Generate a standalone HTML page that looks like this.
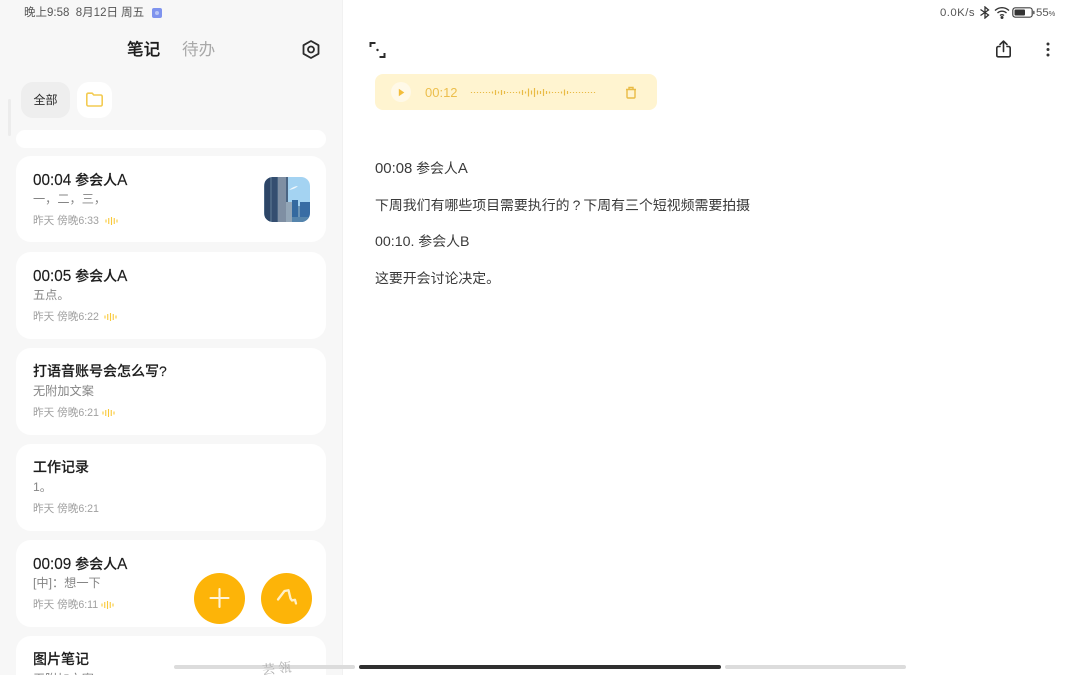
<!DOCTYPE html>
<html lang="zh">
<head>
<meta charset="utf-8">
<style>
html,body{margin:0;padding:0;width:1080px;height:675px;overflow:hidden;background:#fff;font-family:"Liberation Sans","Noto Sans CJK SC",sans-serif;}
#root{position:relative;width:1080px;height:675px;overflow:hidden;filter:blur(.35px);}
.a{position:absolute;white-space:nowrap;}
#side{position:absolute;left:0;top:0;width:342px;height:675px;background:#f7f7f7;border-right:1px solid #f1f1f1;box-sizing:content-box;}
.card{position:absolute;left:16px;width:310px;background:#fff;border-radius:15px;}
.t{position:absolute;left:17px;top:13px;font-size:14px;line-height:22px;color:#1c1c1c;font-weight:500;white-space:nowrap;-webkit-text-stroke:.15px #1c1c1c;}
.t.c{top:12px;}
.t i{font-style:normal;font-size:15.3px;}
.p i{font-style:normal;font-size:14.9px;}
.s{position:absolute;left:17px;top:34px;font-size:12.2px;line-height:18px;color:#858585;white-space:nowrap;}
.m{position:absolute;left:17px;top:57px;font-size:10.6px;line-height:16px;color:#a0a0a0;white-space:nowrap;}
.w{position:absolute;top:60px;}
.p{position:absolute;left:375px;font-size:13.9px;line-height:20px;color:#3a3a3a;white-space:nowrap;}
</style>
</head>
<body>
<div id="root">
<div id="side"></div>

<div class="a" style="left:24px;top:5px;font-size:11.5px;line-height:16px;color:#555;">晚上9:58&nbsp; 8月12日 周五</div>
<div class="a" style="left:152px;top:8px;width:10px;height:10px;border-radius:2px;background:#7f93ee;"></div>
<div class="a" style="left:155px;top:11px;width:4px;height:4px;border-radius:50%;background:#b9c6f7;"></div>

<div class="a" style="left:127px;top:38px;font-size:16.6px;line-height:24px;color:#1d1d1d;font-weight:500;-webkit-text-stroke:.2px #1d1d1d;">笔记</div>
<div class="a" style="left:182px;top:38px;font-size:16.6px;line-height:24px;color:#a8a8a8;">待办</div>
<svg class="a" style="left:301px;top:39px;" width="20" height="21" viewBox="0 0 20 21" fill="none" stroke="#2c2c2c" stroke-width="1.800"><path d="M10 2l7.500 4.200v8.600L10 19l-7.500-4.200V6.200z" stroke-linejoin="round"/><circle cx="10" cy="10.500" r="3"/></svg>

<div class="a" style="left:21px;top:82px;width:49px;height:36px;border-radius:12px;background:#eeeeee;text-align:center;font-size:12px;line-height:36px;color:#2b2b2b;">全部</div>
<div class="a" style="left:77px;top:82px;width:35px;height:36px;border-radius:12px;background:#fff;"></div>
<svg class="a" style="left:85px;top:92px;" width="19" height="16" viewBox="0 0 19 16" fill="none" stroke="#f3cb52" stroke-width="1.600"><path d="M1.800 2.800c0-1 .6-1.600 1.600-1.600h3.800l1.600 1.800h6.800c1 0 1.600.6 1.600 1.600v7.800c0 1-.6 1.600-1.600 1.600H3.400c-1 0-1.600-.6-1.600-1.600z" stroke-linejoin="round"/></svg>
<div class="a" style="left:8px;top:99px;width:3px;height:37px;background:#ececec;border-radius:2px;"></div>

<div class="card" style="top:130px;height:18px;border-radius:10px;"></div>

<div class="card" style="top:156px;height:86px;">
  <div class="t"><i>00:04</i> 参会人<i>A</i></div>
  <div class="s">一，二，三，</div>
  <div class="m">昨天 傍晚6:33</div>
  <svg class="w" style="left:89px;" width="13" height="10" viewBox="0 0 13 10" fill="none" stroke="#f8c93a" stroke-width="1.100"><path d="M1 3.500v3M3.750 2v6M6.500 1v8M9.250 2v6M12 3.500v3"/></svg>
  <svg class="a" style="left:248px;top:21px;border-radius:9px;" width="46" height="45" viewBox="0 0 46 45">
    <rect width="46" height="45" fill="#a4d3f2"/>
    <path d="M25 13q5-4 9-4-3 3-9 4z" fill="#eef6fb"/>
    <rect x="0" y="0" width="24" height="45" fill="#4a6583"/>
    <rect x="1" y="0" width="5" height="45" fill="#2d4566"/>
    <rect x="8" y="0" width="5" height="45" fill="#344e70"/>
    <rect x="14" y="0" width="8" height="45" fill="#7f8fa3"/>
    <rect x="22" y="25" width="6" height="20" fill="#93a6b7"/>
    <rect x="28" y="23" width="6" height="22" fill="#34699f"/>
    <rect x="34" y="29" width="2" height="16" fill="#6a93b5"/>
    <rect x="36" y="25" width="10" height="20" fill="#386ca4"/>
    <rect x="28" y="40" width="18" height="5" fill="#5584ac"/>
  </svg>
</div>

<div class="card" style="top:252px;height:87px;">
  <div class="t"><i>00:05</i> 参会人<i>A</i></div>
  <div class="s">五点。</div>
  <div class="m">昨天 傍晚6:22</div>
  <svg class="w" style="left:88px;" width="13" height="10" viewBox="0 0 13 10" fill="none" stroke="#f8c93a" stroke-width="1.100"><path d="M1 3.500v3M3.750 2v6M6.500 1v8M9.250 2v6M12 3.500v3"/></svg>
</div>

<div class="card" style="top:348px;height:87px;">
  <div class="t c">打语音账号会怎么写?</div>
  <div class="s">无附加文案</div>
  <div class="m">昨天 傍晚6:21</div>
  <svg class="w" style="left:86px;" width="13" height="10" viewBox="0 0 13 10" fill="none" stroke="#f8c93a" stroke-width="1.100"><path d="M1 3.500v3M3.750 2v6M6.500 1v8M9.250 2v6M12 3.500v3"/></svg>
</div>

<div class="card" style="top:444px;height:87px;">
  <div class="t c">工作记录</div>
  <div class="s">1。</div>
  <div class="m">昨天 傍晚6:21</div>
</div>

<div class="card" style="top:540px;height:87px;">
  <div class="t"><i>00:09</i> 参会人<i>A</i></div>
  <div class="s">[中]：想一下</div>
  <div class="m">昨天 傍晚6:11</div>
  <svg class="w" style="left:85px;" width="13" height="10" viewBox="0 0 13 10" fill="none" stroke="#f8c93a" stroke-width="1.100"><path d="M1 3.500v3M3.750 2v6M6.500 1v8M9.250 2v6M12 3.500v3"/></svg>
</div>

<div class="card" style="top:636px;height:60px;">
  <div class="t c">图片笔记</div>
  <div class="s">无附加文案</div>
</div>

<div class="a" style="left:194px;top:573px;width:51px;height:51px;border-radius:50%;background:#fdb408;"></div>
<svg class="a" style="left:208px;top:587px;" width="23" height="23" viewBox="0 0 23 23" fill="none" stroke="#fff4d8" stroke-width="2.100" stroke-linecap="round"><path d="M11.500 2v18M2.500 11h18"/></svg>
<div class="a" style="left:261px;top:573px;width:51px;height:51px;border-radius:50%;background:#fdb408;"></div>
<svg class="a" style="left:275px;top:587px;" width="24" height="24" viewBox="0 0 24 24" fill="none" stroke="#fff0c8" stroke-width="2.300" stroke-linecap="round" stroke-linejoin="round"><path d="M3 12.500L9.500 4L13.500 3.200L15.500 11.500L17 13.500L20 12.800L21 16.500"/></svg>

<!-- bottom bars -->
<div class="a" style="left:174px;top:665px;width:181px;height:4px;border-radius:2px;background:#dcdcdc;"></div>
<div class="a" style="left:359px;top:665px;width:362px;height:4px;border-radius:2px;background:#2f2f2f;"></div>
<div class="a" style="left:725px;top:665px;width:181px;height:4px;border-radius:2px;background:#dcdcdc;"></div>
<div class="a" style="left:262px;top:659px;font-size:13px;line-height:17px;color:#9a9a9a;font-family:'Noto Serif CJK SC','Liberation Serif',serif;opacity:.8;transform:rotate(-6deg);">芸 瓴</div>

<!-- status right -->
<div class="a" style="left:940px;top:5px;font-size:11.400px;line-height:16px;color:#555;letter-spacing:.45px;">0.0K/s</div>
<svg class="a" style="left:978px;top:6px;" width="13" height="13" viewBox="0 0 13 13" fill="none" stroke="#333" stroke-width="1.300"><path d="M2.500 3.500l8 5.500-3.500 3V1L10.500 4l-8 5.500"/></svg>
<svg class="a" style="left:994px;top:6px;" width="16" height="13" viewBox="0 0 16 13" fill="none" stroke="#333" stroke-width="1.400"><path d="M1 4.500c4-3.800 10-3.800 14 0M3.500 7c2.600-2.400 6.400-2.400 9 0M6 9.500c1.200-1 2.800-1 4 0"/><circle cx="8" cy="11.500" r=".8" fill="#333"/></svg>
<svg class="a" style="left:1012px;top:7px;" width="23" height="11" viewBox="0 0 23 11"><rect x=".8" y=".8" width="19.400" height="9.400" rx="2.500" fill="none" stroke="#444" stroke-width="1.200"/><rect x="2.500" y="2.500" width="10.500" height="6" rx="1" fill="#333"/><rect x="21.200" y="3.800" width="1.300" height="3.400" rx=".6" fill="#444"/></svg>
<div class="a" style="left:1036px;top:5px;font-size:11.400px;line-height:16px;color:#555;">55<span style="font-size:7.500px;">%</span></div>

<!-- right toolbar -->
<svg class="a" style="left:368px;top:40px;" width="19" height="20" viewBox="0 0 19 20" fill="none" stroke="#2c2c2c" stroke-width="2"><path d="M2.500 7V3h5M16.500 13v4h-5"/><circle cx="9.500" cy="10" r="1.200" fill="#2c2c2c" stroke="none"/></svg>
<svg class="a" style="left:994px;top:39px;" width="19" height="20" viewBox="0 0 19 20" fill="none" stroke="#2c2c2c" stroke-width="1.600" stroke-linecap="round" stroke-linejoin="round"><path d="M6 7.500H4.500C3.500 7.500 2.800 8.200 2.800 9.200v7c0 1 .7 1.600 1.700 1.600h10c1 0 1.700-.6 1.700-1.600v-7c0-1-.7-1.700-1.700-1.700H13"/><path d="M9.500 12.500V2.500M6 5.500l3.500-3.400L13 5.500"/></svg>
<svg class="a" style="left:1045px;top:41px;" width="6" height="17" viewBox="0 0 6 17" fill="#333"><circle cx="3" cy="3" r="1.500"/><circle cx="3" cy="8.500" r="1.500"/><circle cx="3" cy="14" r="1.500"/></svg>

<!-- audio bar -->
<div class="a" style="left:375px;top:74px;width:282px;height:36px;border-radius:8px;background:#fff4d0;"></div>
<div class="a" style="left:391px;top:82px;width:20px;height:20px;border-radius:50%;background:#fff9e8;"></div>
<svg class="a" style="left:398px;top:88px;" width="7" height="9" viewBox="0 0 7 9"><path d="M.8.800L6.300 4.500.8 8.200z" fill="#f3bd3b"/></svg>
<div class="a" style="left:425px;top:84px;font-size:13px;line-height:17px;color:#ecbe4c;">00:12</div>
<svg class="a" style="left:470px;top:85px;" width="126" height="15" viewBox="0 0 126 15" stroke="#e9bb45" stroke-width="1.200" fill="none">
<path d="M1.500 7v1M4.500 7v1M7.500 7v1M10.500 7v1M13.500 7v1M16.500 7v1M19.500 7v1M22.500 6.500v2M25.500 5v5M28.500 6.500v2M31.500 5v5M34.500 6v3M37.500 7v1M40.500 7v1M43.500 7v1M46.500 7v1M49.500 6.500v2M52.500 5v5M55.500 6.500v2M58.500 3.500v8M61.500 5.500v4M64.500 3v9M67.500 5.500v4M70.500 6v3M73.500 4v7M76.500 6v3M79.500 6.500v2M82.500 7v1M85.500 7v1M88.500 7v1M91.500 6.500v2M94.500 4.500v6M97.500 6v3M100.500 7v1M103.500 7v1M106.500 7v1M109.500 7v1M112.500 7v1M115.500 7v1M118.500 7v1M121.500 7v1M124.500 7v1"/>
</svg>
<svg class="a" style="left:625px;top:86px;" width="12" height="13" viewBox="0 0 12 13" fill="none" stroke="#e9bb45" stroke-width="1.400"><path d="M2 3.500h8v7.500c0 .6-.4 1-1 1H3c-.6 0-1-.4-1-1zM1 3.500h10M4 3.500V1.500h4v2"/></svg>

<!-- text -->
<div class="p" style="top:158px;"><i>00:08</i> 参会人<i>A</i></div>
<div class="p" style="top:195px;">下周我们有哪些项目需要执行的<span style="display:inline-block;width:13.900px;text-align:center;">?</span>下周有三个短视频需要拍摄</div>
<div class="p" style="top:231px;"><i style="font-size:14.2px;">00:10.</i> 参会人<i style="font-size:14.2px;">B</i></div>
<div class="p" style="top:268px;">这要开会讨论决定。</div>
</div>
</body>
</html>
